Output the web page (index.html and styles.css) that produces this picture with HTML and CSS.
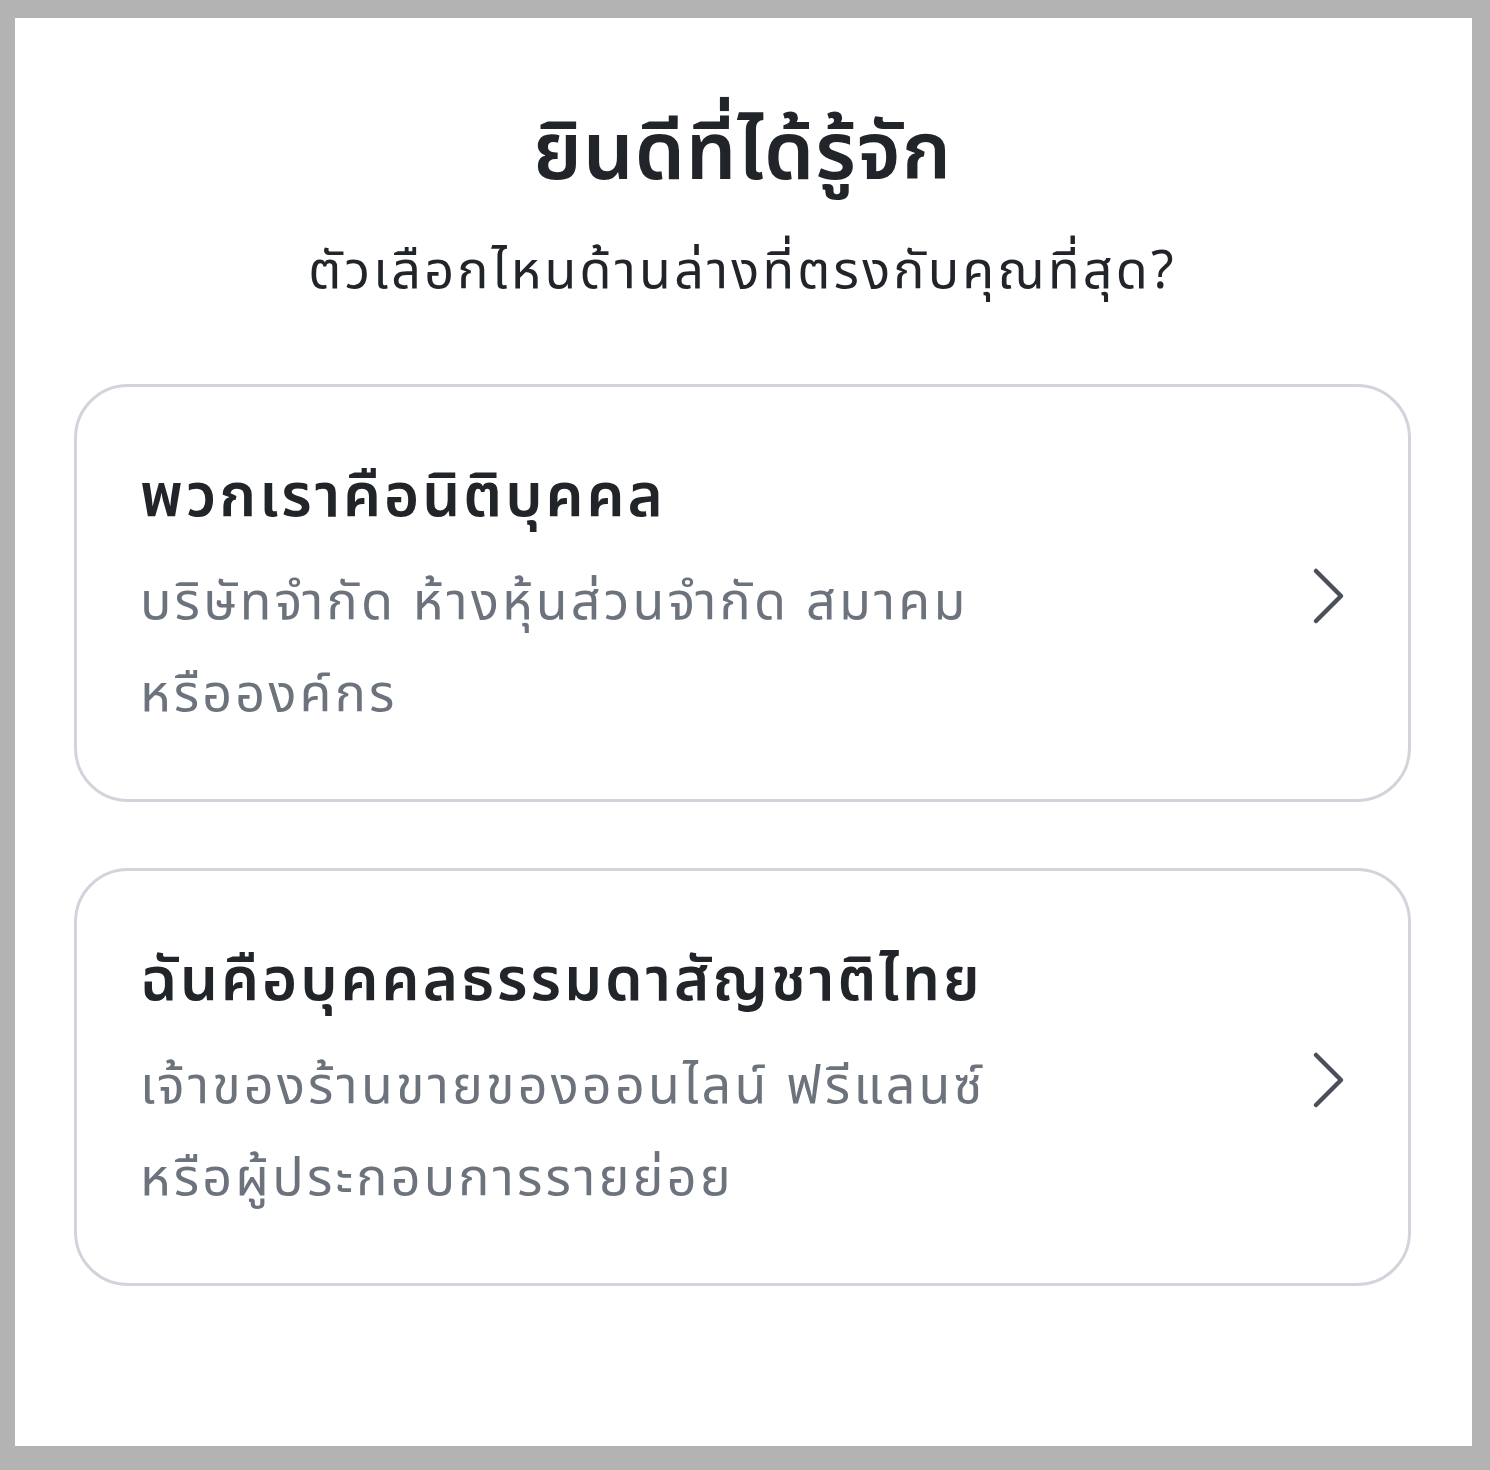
FILE: index.html
```html
<!DOCTYPE html>
<html lang="th">
<head>
    <meta charset="UTF-8">
    <title>ยินดีที่ได้รู้จัก</title>
    <link rel="stylesheet" href="styles.css">
</head>
<body>
    <div id="panel">
        <h1 class="title">ยินดีที่ได้รู้จัก</h1>
        <div class="subtitle">ตัวเลือกไหนด้านล่างที่ตรงกับคุณที่สุด?</div>

        <div class="option">
            <div class="option-text">
                <div class="option-title">พวกเราคือนิติบุคคล</div>
                <div class="option-desc">บริษัทจำกัด ห้างหุ้นส่วนจำกัด สมาคม<br>หรือองค์กร</div>
            </div>
            <svg class="chevron" width="34" height="58" viewBox="0 0 34 58">
                <path d="M4 4 L29 29 L4 54" fill="none" stroke="#4b5058" stroke-width="4.5" stroke-linecap="round" stroke-linejoin="round"/>
            </svg>
        </div>

        <div class="option">
            <div class="option-text">
                <div class="option-title">ฉันคือบุคคลธรรมดาสัญชาติไทย</div>
                <div class="option-desc">เจ้าของร้านขายของออนไลน์ ฟรีแลนซ์<br>หรือผู้ประกอบการรายย่อย</div>
            </div>
            <svg class="chevron" width="34" height="58" viewBox="0 0 34 58">
                <path d="M4 4 L29 29 L4 54" fill="none" stroke="#4b5058" stroke-width="4.5" stroke-linecap="round" stroke-linejoin="round"/>
            </svg>
        </div>
    </div>
</body>
</html>
```

FILE: styles.css
```css
html, body {
    margin: 0;
    padding: 0;
}

body {
    background-color: #b3b3b3;
    padding: 18px 18px 24px 15px;
    font-family: "Noto Sans", "Noto Sans Thai", sans-serif;
}

#panel {
    background-color: white;
    height: 1428px;
    box-sizing: border-box;
    padding: 80px 61px 0 59px;
}

.title {
    margin: 0;
    text-align: center;
    font-size: 80px;
    font-weight: 600;
    letter-spacing: 1px;
    line-height: 100px;
    color: #212529;
}

.subtitle {
    margin-top: 38px;
    text-align: center;
    font-size: 52px;
    letter-spacing: 3.2px;
    line-height: 64px;
    color: #212529;
}

.option {
    margin-top: 84px;
    border: 3px solid #d1d5db;
    border-radius: 54px;
    padding: 68px 62px 62px 63px;
    display: flex;
    align-items: center;
    justify-content: space-between;
}

.option + .option {
    margin-top: 66px;
}

.option-title {
    font-size: 60px;
    font-weight: 600;
    letter-spacing: 3px;
    line-height: 76px;
    color: #212529;
}

.option-desc {
    margin-top: 22px;
    font-size: 52px;
    letter-spacing: 3.2px;
    line-height: 92px;
    color: #6c737c;
}

.chevron {
    flex-shrink: 0;
}
```
